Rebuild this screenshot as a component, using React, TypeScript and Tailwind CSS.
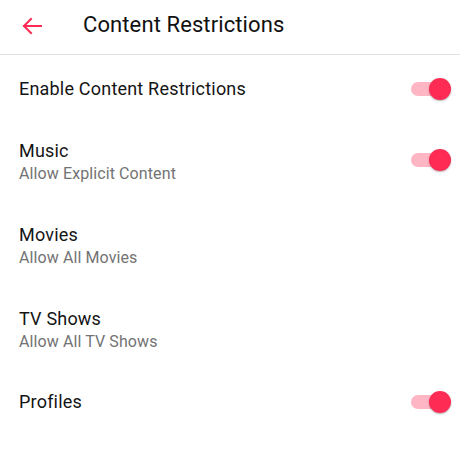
const ACCENT = '#fe2c55';

interface Row {
  title: string;
  subtitle?: string;
  toggle?: boolean;
}

const rows: Row[] = [
  { title: 'Enable Content Restrictions', toggle: true },
  { title: 'Music', subtitle: 'Allow Explicit Content', toggle: true },
  { title: 'Movies', subtitle: 'Allow All Movies' },
  { title: 'TV Shows', subtitle: 'Allow All TV Shows' },
  { title: 'Profiles', toggle: true },
];

function Toggle() {
  return (
    <div className="relative w-[40px] h-[22px] flex-shrink-0">
      <div className="absolute left-0 top-[4px] w-[34px] h-[14px] rounded-full bg-[#ffb6c4]" />
      <div className="absolute right-0 top-0 w-[22px] h-[22px] rounded-full bg-[#fe2c55] shadow-[0_1px_2px_rgba(0,0,0,0.3)]" />
    </div>
  );
}

export default function App() {
  return (
    <div className="w-[460px] h-[458px] bg-white overflow-hidden font-['Roboto',sans-serif] text-[#1a1a1a]">
      {/* Header */}
      <div className="h-[55px] flex items-center border-b border-[#e2e2e2]">
        <div className="w-[83px] h-[48px] flex items-center pl-[22px] pb-[2px]">
          <svg width="20" height="18" viewBox="0 0 20 18" fill="none" stroke={ACCENT} strokeWidth="2" strokeLinecap="square">
            <path d="M2 9H19" />
            <path d="M9 2L2 9L9 16" />
          </svg>
        </div>
        <span className="text-[22px] leading-[28px] pb-[4px] tracking-[0.1px] text-[#111]">Content Restrictions</span>
      </div>

      {/* Preferences */}
      <div className="pt-[2px]">
        {rows.map((row) => (
          <div
            key={row.title}
            className={`flex items-center pl-[19px] pr-[9px] ${row.subtitle ? 'py-[18.5px]' : 'pt-[19.5px] pb-[17.5px]'}`}
          >
            <div className="flex-1 min-w-0">
              <div className={`text-[18px] leading-[24px] tracking-[0.2px] text-[#151515] ${row.subtitle ? 'pt-[2px]' : ''}`}>
                {row.title}
              </div>
              {row.subtitle && (
                <div className="text-[16px] leading-[20px] mt-[1px] tracking-[0.1px] text-[#737373]">{row.subtitle}</div>
              )}
            </div>
            {row.toggle && <Toggle />}
          </div>
        ))}
      </div>
    </div>
  );
}
